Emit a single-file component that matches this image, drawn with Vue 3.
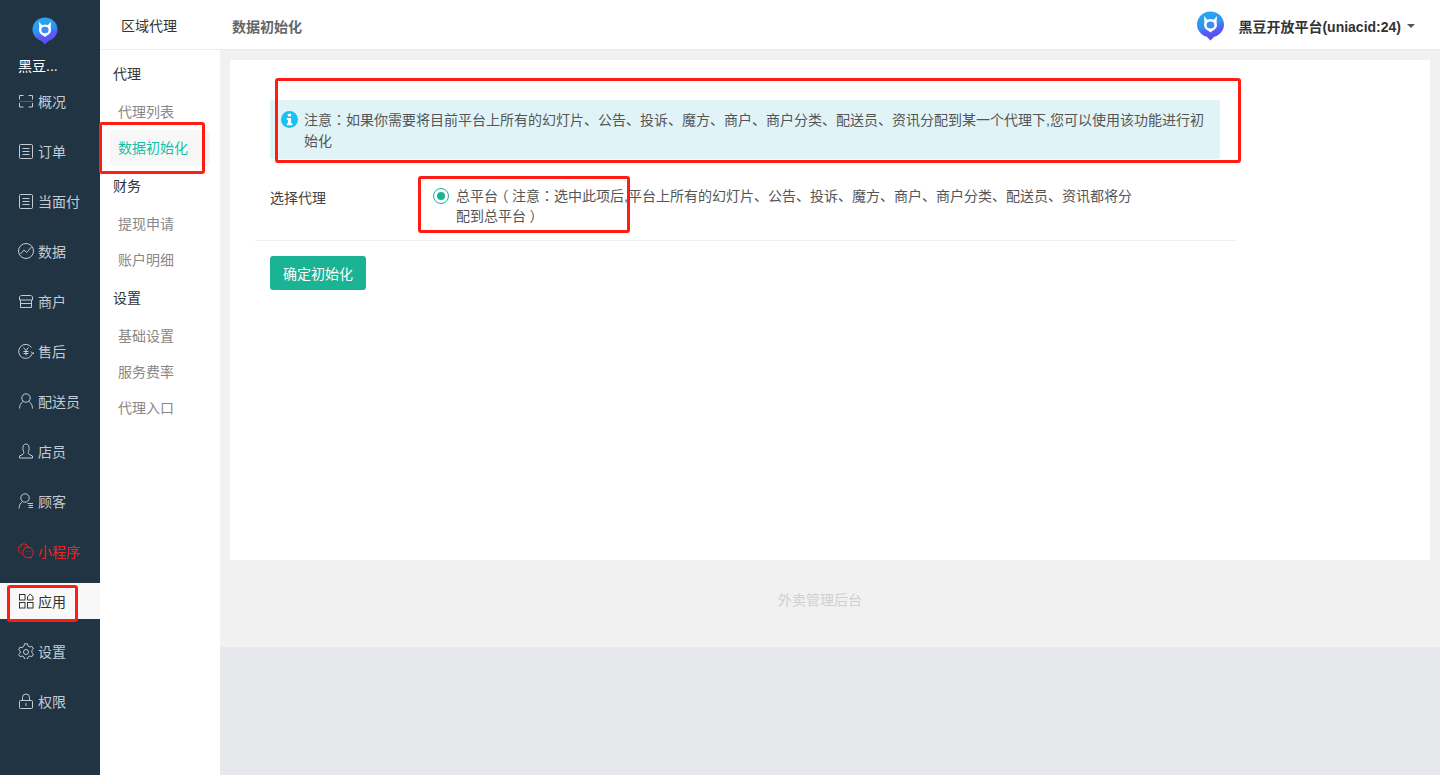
<script setup>
const navItems = [
  { label: '概况', icon: 'scan' },
  { label: '订单', icon: 'doc' },
  { label: '当面付', icon: 'doc' },
  { label: '数据', icon: 'chart' },
  { label: '商户', icon: 'shop' },
  { label: '售后', icon: 'yen' },
  { label: '配送员', icon: 'user' },
  { label: '店员', icon: 'clerk' },
  { label: '顾客', icon: 'customer' },
  { label: '小程序', icon: 'wechat', red: true },
  { label: '应用', icon: 'apps', active: true },
  { label: '设置', icon: 'gear' },
  { label: '权限', icon: 'lock' }
]
const subGroups = [
  { title: '代理', items: ['代理列表', '数据初始化'] },
  { title: '财务', items: ['提现申请', '账户明细'] },
  { title: '设置', items: ['基础设置', '服务费率', '代理入口'] }
]
</script>

<template>
  <div class="page">
    <aside class="rail">
      <div class="brand">
        <svg class="logo" viewBox="0 0 28 30">
          <defs>
            <linearGradient id="pinA" x1="0.2" y1="0" x2="0.5" y2="1">
              <stop offset="0" stop-color="#27aaee" />
              <stop offset="0.5" stop-color="#2e94f3" />
              <stop offset="0.68" stop-color="#5560f6" />
              <stop offset="1" stop-color="#5b48f0" />
            </linearGradient>
          </defs>
          <path d="M14 .5C6.500 .5 .5 6.300 .5 13.500c0 6.300 4.800 10.900 9.800 12.300L14 29.500l3.700-3.700c5-1.400 9.800-6 9.800-12.300C27.500 6.300 21.500 .5 14 .5z" fill="url(#pinA)" />
          <path d="M7.500 5l4.500 5-4 2.500zM20.500 5L16 10l4 2.500z" fill="#fff" />
          <ellipse cx="14" cy="14" rx="5.200" ry="4.800" fill="#3b8df5" stroke="#fff" stroke-width="2.600" />
          <path d="M10.500 18.500h7L14 21.500z" fill="#fff" />
        </svg>
        <div class="brand-name">黑豆...</div>
      </div>
      <nav class="rail-nav">
        <a v-for="item in navItems" :key="item.label" class="rail-item" :class="{ active: item.active, red: item.red }">
          <svg class="rail-icon" viewBox="0 0 16 16" fill="none" stroke="currentColor" stroke-width="1">
            <template v-if="item.icon === 'scan'">
              <path d="M1.500 6.500V2.500h4M10.500 2.500h4v4M14.500 10v4h-4M5.500 14h-4v-4" />
              <path d="M1 8.500h14" stroke-opacity=".3" />
            </template>
            <template v-else-if="item.icon === 'doc'">
              <rect x="1.500" y="1.500" width="13" height="14" rx="1" />
              <path d="M4.500 5.500h7M4.500 8.500h7M4.500 11.500h7" />
            </template>
            <template v-else-if="item.icon === 'chart'">
              <circle cx="8" cy="8" r="7.500" />
              <path d="M2.500 11l3.500-4 2.500 2.500 5-5.500" />
            </template>
            <template v-else-if="item.icon === 'shop'">
              <path d="M3.500 2.500h9c1 0 1.500 .5 2 1.500v3h-13V4c.5-1 1-1.500 2-1.500z" />
              <path d="M2.500 7v7.500h11V7M2.500 10.500h11" />
            </template>
            <template v-else-if="item.icon === 'yen'">
              <path d="M13.500 4.500A7 7 0 1 0 14.500 10" />
              <path d="M13 8.500l2 2.500 1-2" />
              <path d="M5.500 4.500l2.500 3 2.500-3M8 7.500V12.500M5.500 8.500h5M5.500 10.500h5" />
            </template>
            <template v-else-if="item.icon === 'user'">
              <circle cx="8" cy="5" r="4.200" />
              <path d="M5 8.500C2.800 10 1.500 12.500 1.500 15.500M11 8.500c2.200 1.500 3.500 4 3.500 7" />
            </template>
            <template v-else-if="item.icon === 'clerk'">
              <path d="M5.500 8.500C4 4 5.500 1 8 1s4 3 2.500 7.500c-.5 1.500-.2 2.300.5 2.800L14.500 13v2H1.500v-2L5 11.300c.7-.5 1-1.300.5-2.800z" />
            </template>
            <template v-else-if="item.icon === 'customer'">
              <circle cx="7" cy="5" r="4.200" />
              <path d="M4.500 8.500C2.500 10 1 12.500 1 15.500M9.500 10.500h5.500M10.500 12.500h4.500M10.500 14.500h4.500" />
            </template>
            <template v-else-if="item.icon === 'wechat'">
              <path d="M3 10.500A5.200 5.200 0 1 1 10.500 4" />
              <circle cx="10" cy="9.500" r="5.300" />
              <path d="M3 3.800h.8M6.500 3.800h.8M8 8.500h.8M11.500 8.500h.8M12.500 14l1 1.500" stroke-width="1.200" />
            </template>
            <template v-else-if="item.icon === 'apps'">
              <rect x="1.500" y="1.500" width="5.500" height="5.500" />
              <rect x="1.500" y="9.500" width="5.500" height="5.500" />
              <rect x="9.500" y="9.500" width="5.500" height="5.500" />
              <path d="M12.200 1l2.800 2.800V7H9.500V3.800z" />
            </template>
            <template v-else-if="item.icon === 'gear'">
              <path d="M6.500 .8h3l.5 2.200 1.800 1 2.100-.7 1.500 2.700-1.600 1.500v2l1.600 1.500-1.500 2.700-2.100-.7-1.800 1-.5 2.200h-3l-.5-2.200-1.800-1-2.100 .7L.6 11.700l1.600-1.500v-2L.6 6.700 2.100 4l2.100 .7L6 3z" />
              <circle cx="8" cy="9" r="2.500" />
            </template>
            <template v-else>
              <rect x="1.500" y="7.500" width="13" height="8" rx="1" />
              <path d="M4.500 7.500V4.500a3.500 3.500 0 0 1 7 0v3M8 10v3" />
            </template>
          </svg>
          <span>{{ item.label }}</span>
        </a>
      </nav>
    </aside>

    <aside class="sub">
      <div class="sub-head">区域代理</div>
      <div class="sub-body">
        <template v-for="group in subGroups" :key="group.title">
          <div class="sub-title">{{ group.title }}</div>
          <a v-for="text in group.items" :key="text" class="sub-item" :class="{ current: text === '数据初始化' }">{{ text }}</a>
        </template>
      </div>
    </aside>

    <div class="main">
      <header class="topbar">
        <div class="crumb">数据初始化</div>
        <div class="account">
          <svg class="avatar" viewBox="0 0 28 30">
            <path d="M14 .5C6.500 .5 .5 6.300 .5 13.500c0 6.300 4.800 10.900 9.800 12.300L14 29.500l3.700-3.700c5-1.400 9.800-6 9.800-12.300C27.500 6.300 21.500 .5 14 .5z" fill="url(#pinA)" />
            <path d="M7.500 5l4.500 5-4 2.500zM20.500 5L16 10l4 2.500z" fill="#fff" />
            <ellipse cx="14" cy="14" rx="5.200" ry="4.800" fill="#3b8df5" stroke="#fff" stroke-width="2.600" />
            <path d="M10.500 18.500h7L14 21.500z" fill="#fff" />
          </svg>
          <span class="account-name">黑豆开放平台(uniacid:24)</span>
          <i class="caret"></i>
        </div>
      </header>

      <div class="content">
        <section class="card">
          <div class="alert">
            <svg class="alert-icon" viewBox="0 0 16 16">
              <circle cx="8" cy="8" r="8" fill="#17c1f1" />
              <rect x="6.500" y="2.500" width="3" height="2.600" rx=".6" fill="#fff" />
              <path d="M5.500 6.500h4v5h1.200v2H5.500v-2h1v-3h-1z" fill="#fff" />
            </svg>
            <div>
              <div class="line">注意<span class="cell">：</span>如果你需要将目前平台上所有的幻灯片、公告、投诉、魔方、商户、商户分类、配送员、资讯分配到某一个代理下,您可以使用该功能进行初</div>
              <div class="line">始化</div>
            </div>
          </div>
          <div class="form-row">
            <label class="form-label">选择代理</label>
            <div class="radio-line">
              <span class="radio"><i></i></span>
              <div class="radio-text">
                <div class="line">总平台<span class="cell">（</span>注意<span class="cell">：</span>选中此项后,平台上所有的幻灯片、公告、投诉、魔方、商户、商户分类、配送员、资讯都将分</div>
                <div class="line">配到总平台<span class="cell">）</span></div>
              </div>
            </div>
          </div>
          <button class="submit" type="button">确定初始化</button>
        </section>
        <footer class="foot">外卖管理后台</footer>
      </div>
      <div class="rest"></div>
    </div>

    <div class="mark mark-alert"></div>
    <div class="mark mark-radio"></div>
    <div class="mark mark-app"></div>
    <div class="mark mark-sub"></div>
  </div>
</template>

<style>
html, body { margin: 0; padding: 0; overflow: hidden; }
</style>

<style scoped>
.page {
  position: relative;
  display: flex;
  width: 1440px;
  height: 775px;
  overflow: hidden;
  font-family: "Liberation Sans", "Noto Sans CJK SC", sans-serif;
  font-size: 14px;
  color: #333;
  background: #e7e8ec;
}
.line { white-space: nowrap; }
.cell {
  display: inline-block;
  width: 14px;
  font-family: "Noto Sans CJK TC", sans-serif;
  font-feature-settings: "halt";
  line-height: 1;
  text-align: center;
}
.rail {
  flex: 0 0 100px;
  background: #203444;
}
.brand { height: 83px; box-sizing: border-box; padding-top: 17px; }
.logo { display: block; width: 26px; height: 28px; margin-left: 32px; }
.brand-name { margin: 11px 0 0 18px; color: #fff; line-height: 20px; }
.rail-nav { display: flex; flex-direction: column; gap: 14px; }
.rail-item {
  display: flex;
  align-items: center;
  height: 36px;
  padding-left: 18px;
  color: #c4ccd2;
}
.rail-item.red { color: #ff1a1a; }
.rail-item.active { background: #f8f8f8; color: #333; }
.rail-icon { flex: none; width: 16px; height: 16px; margin-right: 4px; }
.sub { flex: 0 0 120px; background: #fff; }
.sub-head {
  box-sizing: border-box;
  height: 50px;
  padding-left: 21px;
  line-height: 52px;
  color: #333;
  border-bottom: 1px solid #eee;
}
.sub-body { padding: 4px 10px 0; }
.sub-title { height: 40px; line-height: 40px; padding-left: 3px; color: #333; }
.sub-item {
  display: block;
  height: 36px;
  line-height: 36px;
  padding-left: 8px;
  color: #888;
  border-radius: 3px;
}
.sub-item.current { background: #f7f7f7; color: #17bfa8; }
.main { flex: 1; display: flex; flex-direction: column; min-width: 0; }
.topbar {
  flex: 0 0 50px;
  box-sizing: border-box;
  display: flex;
  align-items: center;
  justify-content: space-between;
  padding: 2px 25px 0 12px;
  background: #fff;
  border-bottom: 1px solid #e9e9e9;
}
.crumb { color: #666; font-weight: 700; }
.account { display: flex; align-items: center; }
.avatar { width: 29px; height: 30px; margin-right: 13px; }
.account-name { color: #333; font-weight: 700; }
.caret {
  width: 0;
  height: 0;
  margin-left: 6px;
  border-left: 4px solid transparent;
  border-right: 4px solid transparent;
  border-top: 4px solid #555;
}
.content { background: #f1f1f1; padding: 10px 10px 0; height: 597px; box-sizing: border-box; }
.card {
  box-sizing: border-box;
  height: 500px;
  padding: 40px 0 0 25px;
  background: #fff;
}
.alert {
  box-sizing: border-box;
  display: flex;
  width: 950px;
  height: 59px;
  margin-left: 15px;
  padding: 10px 15px 0 11px;
  background: #e0f4f8;
  border-radius: 2px;
  color: #555;
  line-height: 21px;
}
.alert-icon { flex: none; width: 17px; height: 17px; margin: 1px 6px 0 0; }
.form-row {
  box-sizing: border-box;
  display: flex;
  width: 982px;
  height: 82px;
  padding: 19px 0 0 15px;
  border-bottom: 1px solid #eef2f2;
}
.form-label { flex: 0 0 163px; height: 40px; line-height: 40px; color: #444; }
.radio-line { display: flex; width: 704px; padding-top: 8px; }
.radio {
  flex: none;
  box-sizing: border-box;
  width: 16px;
  height: 16px;
  margin: 2px 7px 0 0;
  border: 1px solid #1ab394;
  border-radius: 50%;
  display: flex;
  align-items: center;
  justify-content: center;
}
.radio i { width: 8px; height: 8px; border-radius: 50%; background: #1ab394; }
.radio-text { line-height: 20px; color: #555; }
.submit {
  display: block;
  width: 96px;
  height: 34px;
  margin: 15px 0 0 15px;
  padding: 0;
  border: 0;
  border-radius: 3px;
  background: #1ab394;
  color: #fff;
  font: inherit;
}
.foot { height: 87px; margin-right: 20px; line-height: 80px; text-align: center; color: #d0d0d0; }
.rest { flex: 1; background: #e7e8ec; }
.mark {
  position: absolute;
  box-sizing: border-box;
  border: 3px solid #ff1c12;
  border-radius: 3px;
  pointer-events: none;
}
.mark-alert { left: 275px; top: 78px; width: 966px; height: 85px; }
.mark-radio { left: 418px; top: 176px; width: 212px; height: 57px; }
.mark-app { left: 7px; top: 585px; width: 71px; height: 37px; }
.mark-sub { left: 99px; top: 122px; width: 106px; height: 52px; }
</style>
